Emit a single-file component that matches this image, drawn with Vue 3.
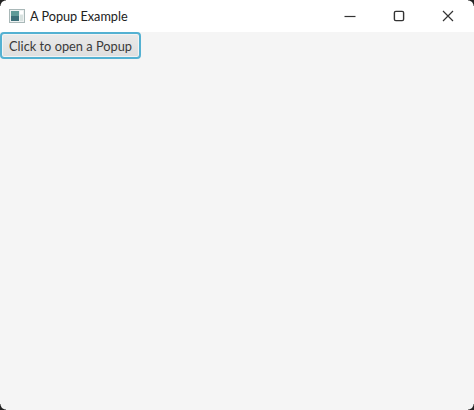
<script setup>
const title = 'A Popup Example'
const label = 'Click to open a Popup'
</script>

<template>
  <div class="window">
    <header class="titlebar">
      <svg class="app-icon" width="16" height="14" viewBox="0 0 16 14">
        <rect x="0.5" y="0.5" width="15" height="13" fill="#eef2f2" stroke="#a9b8b8" />
        <rect x="2" y="2" width="8" height="10" fill="#5f9a98" />
        <rect x="2" y="7" width="8" height="5" fill="#3c6f78" />
        <rect x="11" y="2" width="3" height="3" fill="#fff" />
        <rect x="11" y="6" width="3" height="6" fill="#d8e2e0" />
      </svg>
      <span class="title">{{ title }}</span>
      <div class="controls">
        <svg class="control" width="14" height="14" viewBox="0 0 14 14">
          <path d="M1.5 7.5H12.5" stroke="#333" stroke-width="1.2" fill="none" />
        </svg>
        <svg class="control" width="14" height="14" viewBox="0 0 14 14">
          <rect x="2.4" y="2.4" width="9.2" height="9.2" rx="1.4" stroke="#333" stroke-width="1.4" fill="none" />
        </svg>
        <svg class="control" width="14" height="14" viewBox="0 0 14 14">
          <path d="M2 2L12 12M12 2L2 12" stroke="#333" stroke-width="1.2" fill="none" />
        </svg>
      </div>
    </header>
    <main class="content">
      <button class="popup-button" type="button">{{ label }}</button>
    </main>
    <span class="corner top-left"></span>
    <span class="corner top-right"></span>
    <span class="corner bottom-left"></span>
    <span class="corner bottom-right"></span>
  </div>
</template>

<style>
html, body { margin: 0; background: #fff; }
</style>

<style scoped>
.window {
  position: relative;
  width: 474px;
  height: 410px;
  overflow: hidden;
  display: flex;
  flex-direction: column;
  background: #f5f5f5;
  font-family: Lato, "Open Sans", sans-serif;
}
.titlebar {
  height: 32px;
  flex: none;
  display: flex;
  align-items: center;
  padding-left: 9px;
  background: #fff;
}
.app-icon { flex: none; }
.title {
  margin-left: 5px;
  font-size: 12.7px;
  color: #222;
}
.controls {
  margin-left: auto;
  margin-right: 19px;
  display: flex;
  gap: 35px;
}
.control { display: block; }
.content {
  flex: 1;
}
.popup-button {
  display: block;
  width: 141px;
  height: 27px;
  margin: 0;
  padding: 0;
  border: 2px solid #54b1d2;
  border-radius: 4px;
  background: linear-gradient(#eaeaea, #dedede);
  box-shadow: inset 0 0 0 1px #f3f3f3;
  font-family: inherit;
  font-size: 12.8px;
  color: #3a3a3a;
}
.corner {
  position: absolute;
  width: 6px;
  height: 6px;
  background: radial-gradient(circle at var(--cx) var(--cy), transparent 5px, #222 6px);
}
.top-left { top: 0; left: 0; --cx: 6px; --cy: 6px; }
.top-right { top: 0; right: 0; --cx: 0; --cy: 6px; }
.bottom-left { bottom: 0; left: 0; --cx: 6px; --cy: 0; }
.bottom-right { bottom: 0; right: 0; --cx: 0; --cy: 0; }
</style>
